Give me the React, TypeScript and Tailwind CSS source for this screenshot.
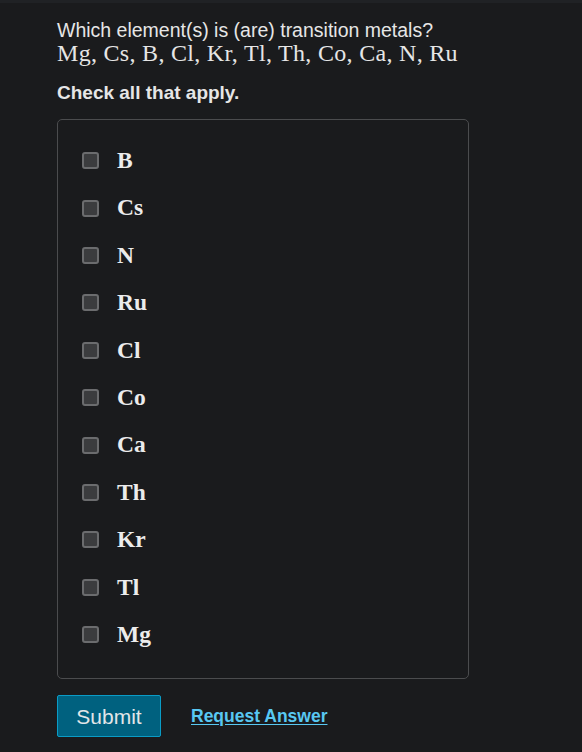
const options = ['B', 'Cs', 'N', 'Ru', 'Cl', 'Co', 'Ca', 'Th', 'Kr', 'Tl', 'Mg'];

export default function App() {
  return (
    <div className="min-h-[752px] w-full bg-[#1a1b1d] border-t-[3px] border-[#202225] font-['Liberation_Sans',Arial,sans-serif] text-[#e6e6e6]">
      <div className="pl-[57px] pt-[16px] w-[469px]">
        {/* Question */}
        <p className="text-[19.5px] leading-[22px]">Which element(s) is (are) transition metals?</p>
        <p className="font-['Liberation_Serif','DejaVu_Serif',serif] text-[24px] leading-[25px] tracking-[0.3px]">
          Mg, Cs, B, Cl, Kr, Tl, Th, Co, Ca, N, Ru
        </p>
        <p className="mt-[16px] text-[19px] font-bold leading-[22px]">Check all that apply.</p>

        {/* Options */}
        <div className="mt-[15px] rounded-[5px] border border-[#4b4c4e] pt-[17px] pb-[20px] pl-[24px]">
          <div className="flex flex-col">
            {options.map((o) => (
              <label key={o} className="flex h-[47.4px] items-center gap-[18px]">
                <span className="h-[17px] w-[17px] rounded-[3px] border-2 border-[#6b6c6e] bg-[#3b3c3e]" />
                <span className="font-['Liberation_Serif','DejaVu_Serif',serif] text-[23.5px] font-bold text-[#ececec]">{o}</span>
              </label>
            ))}
          </div>
        </div>

        {/* Actions */}
        <div className="mt-[16px] flex items-center gap-[30px]">
          <button className="h-[42px] w-[104px] rounded-[2px] border border-[#0a9cc6] bg-[#00617f] text-[21px] text-[#e2e6e8]">
            Submit
          </button>
          <a href="#" className="text-[17.5px] font-bold text-[#58c8f2] underline underline-offset-2">
            Request Answer
          </a>
        </div>
      </div>
    </div>
  );
}
